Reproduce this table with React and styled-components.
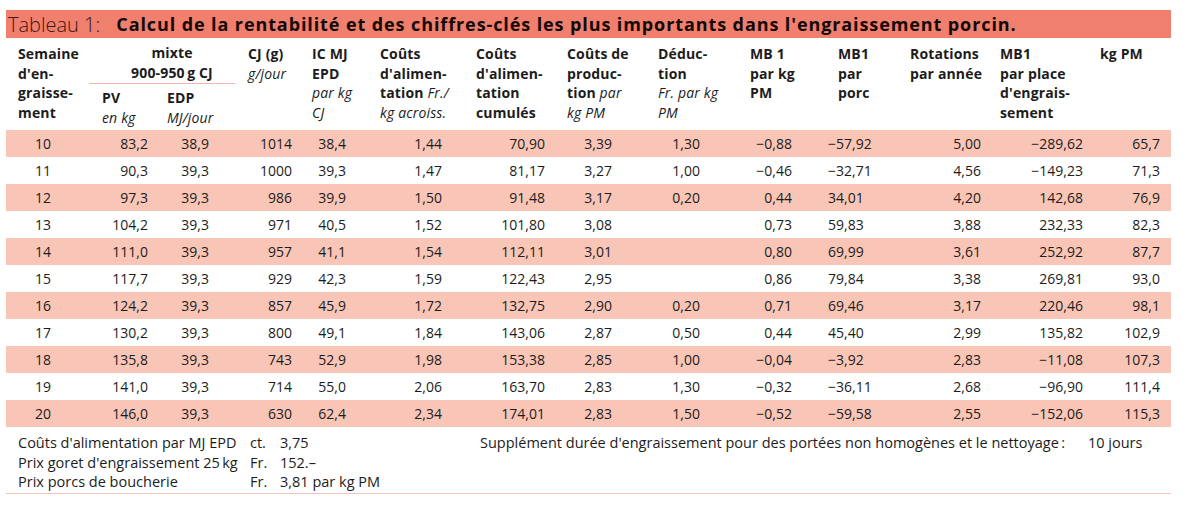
import React from "react";
import styled, { createGlobalStyle } from "styled-components";

const Global = createGlobalStyle`
  html, body { margin: 0; padding: 0; background: #ffffff; }
  body { font-family: "Open Sans", "Noto Sans", sans-serif; color: #1c1c1c; }
`;

const COLS = "86px 65px 81px 64px 68px 96px 91px 91px 92px 88px 72px 90px 100px 81px";
const PAD_R = [0, 9, 29, 10, 24, 24, 12, 36, 40, 36, 38, 9, 7, 11];

const Page = styled.div`
  width: 1165px;
  padding: 10px 0 0 6px;
`;

const TitleBar = styled.div`
  height: 28px;
  background: #f07f6e;
  display: flex;
  align-items: center;
  padding-left: 2px;
  white-space: nowrap;
  overflow: hidden;
`;

const TitleLabel = styled.span`
  font-weight: 300;
  font-size: 20px;
  color: #3b1710;
  margin-right: 16px;
`;

const TitleText = styled.span`
  font-weight: 700;
  font-size: 18px;
  color: #140806;
  letter-spacing: 0.9px;
`;

const Header = styled.div`
  display: grid;
  grid-template-columns: ${COLS};
  grid-template-rows: 42px 46px;
  padding-top: 4px;
`;

const HCell = styled.div`
  grid-column: ${(p) => p.$col} / span ${(p) => p.$span || 1};
  grid-row: ${(p) => p.$row || "1 / span 2"};
  padding: ${(p) => (p.$row === 2 ? "4px" : "2px")} 0 0 ${(p) => (p.$first ? 12 : 10)}px;
  font-size: 14px;
  line-height: 19.5px;
  font-weight: 700;
  text-align: left;
  white-space: nowrap;
  letter-spacing: 0.15px;
`;

const Mixte = styled(HCell)`
  border-bottom: 1px solid #f2b9ab;
  margin: 0 3px 0 -3px;
  padding-left: 20px;
  padding-top: 1px;
  text-align: center;
`;

const It = styled.span`
  font-style: italic;
  font-weight: 400;
`;

const Row = styled.div`
  display: grid;
  grid-template-columns: ${COLS};
  height: 27px;
  align-items: center;
  background: ${(p) => (p.$shaded ? "#f9c5b6" : "transparent")};
`;

const Cell = styled.div`
  font-size: 14px;
  text-align: ${(p) => (p.$left ? "left" : "right")};
  padding-left: ${(p) => (p.$left ? "29px" : "0")};
  padding-right: ${(p) => p.$pr}px;
  white-space: nowrap;
`;

const Footer = styled.div`
  display: flex;
  padding: 6px 0 1px 12px;
  border-bottom: 1px solid #f2c3b8;
  font-size: 14.5px;
  line-height: 19.5px;
`;

const FootGrid = styled.div`
  display: grid;
  grid-template-columns: 232px 30px 200px;
`;

const FootRight = styled.div`
  display: grid;
  grid-template-columns: 608px auto;
  align-self: flex-start;
`;

const Span = styled.span`
  white-space: nowrap;
`;

const M = "\u2212";

const rows = [
  [10, "83,2", "38,9", "1014", "38,4", "1,44", "70,90", "3,39", "1,30", M + "0,88", M + "57,92", "5,00", M + "289,62", "65,7"],
  [11, "90,3", "39,3", "1000", "39,3", "1,47", "81,17", "3,27", "1,00", M + "0,46", M + "32,71", "4,56", M + "149,23", "71,3"],
  [12, "97,3", "39,3", "986", "39,9", "1,50", "91,48", "3,17", "0,20", "0,44", "34,01", "4,20", "142,68", "76,9"],
  [13, "104,2", "39,3", "971", "40,5", "1,52", "101,80", "3,08", "", "0,73", "59,83", "3,88", "232,33", "82,3"],
  [14, "111,0", "39,3", "957", "41,1", "1,54", "112,11", "3,01", "", "0,80", "69,99", "3,61", "252,92", "87,7"],
  [15, "117,7", "39,3", "929", "42,3", "1,59", "122,43", "2,95", "", "0,86", "79,84", "3,38", "269,81", "93,0"],
  [16, "124,2", "39,3", "857", "45,9", "1,72", "132,75", "2,90", "0,20", "0,71", "69,46", "3,17", "220,46", "98,1"],
  [17, "130,2", "39,3", "800", "49,1", "1,84", "143,06", "2,87", "0,50", "0,44", "45,40", "2,99", "135,82", "102,9"],
  [18, "135,8", "39,3", "743", "52,9", "1,98", "153,38", "2,85", "1,00", M + "0,04", M + "3,92", "2,83", M + "11,08", "107,3"],
  [19, "141,0", "39,3", "714", "55,0", "2,06", "163,70", "2,83", "1,30", M + "0,32", M + "36,11", "2,68", M + "96,90", "111,4"],
  [20, "146,0", "39,3", "630", "62,4", "2,34", "174,01", "2,83", "1,50", M + "0,52", M + "59,58", "2,55", M + "152,06", "115,3"],
];

export default function App() {
  return (
    <>
      <Global />
      <Page>
        <TitleBar>
          <TitleLabel>Tableau 1:</TitleLabel>
          <TitleText>
            Calcul de la rentabilité et des chiffres-clés les plus importants dans l'engraissement porcin.
          </TitleText>
        </TitleBar>
        <Header>
          <HCell $col={1} $first>
            Semaine<br />d'en-<br />graisse-<br />ment
          </HCell>
          <Mixte $col={2} $span={2} $row={1}>
            mixte<br />900-950{"\u2009"}g CJ
          </Mixte>
          <HCell $col={2} $row={2}>
            PV<br /><It>en kg</It>
          </HCell>
          <HCell $col={3} $row={2}>
            EDP<br /><It>MJ/jour</It>
          </HCell>
          <HCell $col={4}>
            CJ (g)<br /><It>g/jour</It>
          </HCell>
          <HCell $col={5}>
            IC MJ<br />EPD<br /><It>par kg</It><br /><It>CJ</It>
          </HCell>
          <HCell $col={6}>
            Coûts<br />d'alimen-<br />tation <It>Fr./</It><br /><It>kg acroiss.</It>
          </HCell>
          <HCell $col={7}>
            Coûts<br />d'alimen-<br />tation<br />cumulés
          </HCell>
          <HCell $col={8}>
            Coûts de<br />produc-<br />tion <It>par</It><br /><It>kg PM</It>
          </HCell>
          <HCell $col={9}>
            Déduc-<br />tion<br /><It>Fr. par kg</It><br /><It>PM</It>
          </HCell>
          <HCell $col={10}>
            MB 1<br />par kg<br />PM
          </HCell>
          <HCell $col={11}>
            MB1<br />par<br />porc
          </HCell>
          <HCell $col={12}>
            Rotations<br />par année
          </HCell>
          <HCell $col={13}>
            MB1<br />par place<br />d'engrais-<br />sement
          </HCell>
          <HCell $col={14}>kg PM</HCell>
        </Header>
        {rows.map((r, i) => (
          <Row key={r[0]} $shaded={i % 2 === 0}>
            {r.map((v, j) => (
              <Cell key={j} $left={j === 0} $pr={PAD_R[j]}>
                {v}
              </Cell>
            ))}
          </Row>
        ))}
        <Footer>
          <FootGrid>
            <Span>Coûts d'alimentation par MJ EPD</Span>
            <Span>ct.</Span>
            <Span>3,75</Span>
            <Span>Prix goret d'engraissement 25{"\u2009"}kg</Span>
            <Span>Fr.</Span>
            <Span>152.–</Span>
            <Span>Prix porcs de boucherie</Span>
            <Span>Fr.</Span>
            <Span>3,81 par kg PM</Span>
          </FootGrid>
          <FootRight>
            <Span>Supplément durée d'engraissement pour des portées non homogènes et le nettoyage{"\u2009"}:</Span>
            <Span>10 jours</Span>
          </FootRight>
        </Footer>
      </Page>
    </>
  );
}
